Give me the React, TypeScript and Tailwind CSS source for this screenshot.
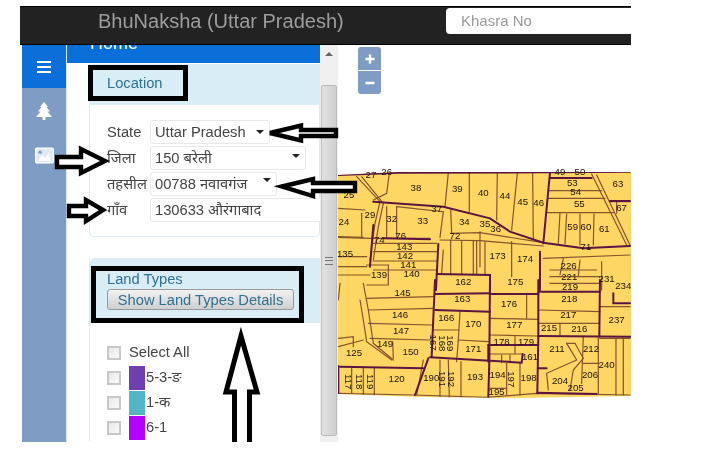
import React from "react";

const thinA = [
  "M25 262 L120 265 L300 265", "M330 270 L450 272 L640 288", "M355 68 L345 170", "M418 70 L418 185", "M502 70 L500 210", "M562 70 L545 240", "M608 70 L610 270",
  "M655 122 L815 122", "M655 145 L825 145", "M650 188 L850 188", "M690 190 L685 280", "M710 192 L705 282", "M750 192 L750 285", "M792 192 L790 285", "M785 72 L890 285", "M800 75 L900 285", "M840 155 L900 155", "M860 155 L860 190",
  "M178 70 L170 130 L130 150", "M80 80 L150 155 L135 220 L120 330", "M95 80 L160 160 L145 230 L130 330", "M200 170 L200 265", "M170 170 L170 265", "M362 175 L365 250", "M450 245 L450 350", "M362 250 L450 248 L640 278",
  "M25 320 L110 320", "M25 350 L110 350", "M130 280 L320 280", "M130 305 L320 305", "M130 333 L320 333", "M130 360 L320 360", "M110 345 L175 345 L175 405 L110 405", "M545 275 L545 380", "M465 275 L465 375", "M660 380 L810 380", "M660 400 L810 400", "M660 360 L800 360", "M900 315 L640 325", "M700 325 L690 375", "M750 330 L745 380", "M815 335 L815 420",
  "M25 175 L105 180", "M25 260 L100 262", "M95 190 L95 262", "M200 170 L340 185 L330 262", "M340 300 L335 370", "M362 270 L362 372", "M395 272 L395 372", "M430 272 L430 372", "M440 272 L440 372", "M120 375 L25 375",
];
const thickA = [
  "M25 75 L110 72 L205 68 L660 67 L900 65", "M130 155 L340 170 L480 205 L540 245 L640 278 L760 295 L900 288", "M660 68 L640 280", "M660 84 L785 84", "M160 265 L300 268", "M325 282 L318 420", "M320 372 L480 375 L480 420", "M630 305 L630 420", "M840 153 L900 153", "M130 225 L120 350",
];
const thinB = [
  "M30 10 L25 60", "M110 55 L310 50", "M115 90 L310 85", "M115 130 L305 135", "M120 175 L300 180", "M25 175 L70 170 L70 200", "M25 200 L100 180", "M100 10 L115 90 L130 190 L190 240", "M90 60 L100 120 L110 185 L185 240",
  "M188 185 L190 235", "M390 95 L385 180 L380 245", "M310 150 L385 150", "M385 180 L475 185", "M590 40 L590 115", "M480 115 L625 118", "M480 165 L620 168", "M555 170 L555 220", "M625 90 L810 95", "M625 130 L808 130", "M690 130 L690 165", "M810 80 L900 80", "M810 175 L900 175", "M858 175 L858 345", "M805 175 L805 340", "M760 170 L755 310", "M760 250 L805 250", "M710 190 L740 240 L650 280 L655 330", "M735 190 L760 235 L730 270 L720 330", "M710 190 L735 190", "M880 175 L880 345",
  "M65 262 L65 340", "M100 262 L100 345", "M133 262 L133 345", "M280 240 L260 345", "M330 240 L330 350", "M355 240 L358 352", "M393 245 L393 352", "M530 250 L530 345", "M570 250 L570 345", "M475 325 L530 325", "M515 225 L515 248", "M540 225 L540 248", "M480 222 L575 222",
  "M25 340 L250 345 L470 352 L620 340 L900 345",
];
const thickB = [
  "M315 0 L305 230", "M315 90 L480 95", "M315 42 L480 40", "M480 0 L478 245", "M480 42 L625 42", "M625 0 L625 170", "M625 35 L810 35", "M810 0 L808 170", "M625 168 L905 170", "M625 170 L622 340", "M475 195 L625 195", "M475 195 L475 245", "M300 232 L575 248 L578 222", "M30 260 L280 265", "M295 235 L255 345", "M25 258 L25 340", "M625 265 L650 265", "M478 245 L475 350", "M622 338 L800 342", "M850 40 L850 70 L900 70",
];

const labelsA: [string, number, number][] = [
  ["26",170,65],["27",123,73],["25",57,135],["38",258,113],["39",382,116],["40",460,127],["44",525,138],["45",578,155],["46",626,157],["49",690,66],["50",750,66],["53",727,97],["54",737,124],["55",748,161],["63",864,100],["67",875,172],["37",320,175],["29",120,195],["32",185,207],["33",278,211],["34",403,214],["24",42,214],["35",465,222],["36",497,235],["59",728,230],["60",768,230],["61",823,236],["72",375,258],["76",212,257],["74",148,268],["143",223,290],["142",225,316],["141",235,345],["140",245,372],["139",147,375],["135",45,311],["173",503,317],["174",585,325],["226",716,347],["71",768,290],["162",400,394],["175",556,396],["221",718,381],
];
const labelsB: [string, number, number][] = [
  ["219",720,20],["231",830,-5],["234",880,18],["145",218,38],["163",397,57],["176",537,72],["218",718,55],["146",210,104],["166",349,112],["170",430,130],["177",553,133],["217",715,103],["237",860,120],["147",213,151],["215",657,142],["216",748,145],["125",72,217],["149",165,190],["150",242,215],["178",515,186],["179",588,186],["171",430,205],["211",681,205],["212",783,205],["240",830,253],["161",600,230],["120",200,295],["190",304,292],["193",435,291],["194",503,285],["198",596,292],["204",690,301],["206",780,284],["205",737,322],["195",500,335],
];
const rotated: [string, number, number][] = [
  ["167",310,188],["168",336,190],["169",362,190],["117",55,305],["118",90,305],["119",123,305],["191",338,297],["192",366,297],["197",545,298],
];

function MapDrawing() {
  return (
    <svg viewBox="338 45 293 397" className="w-full h-full block">
      <defs>
        <clipPath id="mapclip">
          <path d="M338 175 L398 172 L631 172 L631 396 L520 398 L420 397 L338 394 Z" />
        </clipPath>
      </defs>
      <path d="M338 175 L398 172 L631 172 L631 396 L520 398 L420 397 L338 394 Z" fill="#fdd663" />
      <g clipPath="url(#mapclip)" fill="none" strokeLinecap="round">
        <g transform="translate(330 150) scale(0.3333)">
          {thinA.map((d) => <path key={d} d={d} stroke="#86532f" strokeWidth={3.6} />)}
          {thickA.map((d) => <path key={d} d={d} stroke="#5e1440" strokeWidth={6} />)}
        </g>
        <g transform="translate(330 280) scale(0.3333)">
          {thinB.map((d) => <path key={d} d={d} stroke="#86532f" strokeWidth={3.6} />)}
          {thickB.map((d) => <path key={d} d={d} stroke="#5e1440" strokeWidth={6} />)}
        </g>
      </g>
      <g fontFamily="'Liberation Sans', sans-serif" fill="#1f120a" textAnchor="middle" dominantBaseline="central">
        <g transform="translate(330 150) scale(0.3333)" fontSize={29}>
          {labelsA.map(([t, x, y]) => <text key={t + x} x={x} y={y}>{t}</text>)}
        </g>
        <g transform="translate(330 280) scale(0.3333)" fontSize={29}>
          {labelsB.map(([t, x, y]) => <text key={t + x} x={x} y={y}>{t}</text>)}
          {rotated.map(([t, x, y]) => <text key={t + x} x={x} y={y} transform={`rotate(90 ${x} ${y})`}>{t}</text>)}
        </g>
      </g>
    </svg>
  );
}

function Arrows() {
  const arrow = "fill-white stroke-black";
  return (
    <svg viewBox="0 0 713 465" className="absolute inset-0 w-[713px] h-[465px] pointer-events-none">
      <defs>
        <clipPath id="bodyclip"><rect x="0" y="0" width="713" height="442" /></clipPath>
      </defs>
      <polygon className={arrow} strokeWidth={4.4} points="270,133 301,125.5 301,130 336,130 336,136 301,136 301,140.5" />
      <polygon className={arrow} strokeWidth={4.4} points="105,161 81,149 81,157 57,157 57,167 81,167 81,173" />
      <polygon className={arrow} strokeWidth={4.4} points="282,186.5 313,179 313,183 355,183 355,191 313,191 313,196" />
      <polygon className={arrow} strokeWidth={4.4} points="103,210 86,200 86,206 69,206 69,216 86,216 86,221" />
      <polygon className={arrow} clipPath="url(#bodyclip)" strokeWidth={5} points="241,336 226,392 234.5,392 234.5,450 249.5,450 249.5,392 257,392" />
    </svg>
  );
}

function Select({ w, text, caret }: { w: string; text: string; caret?: string }) {
  return (
    <div className={`${w} h-[24px] flex items-center bg-white border border-[#e8e8e8] rounded-[3px] pl-[4px] relative shrink-0 text-[14.7px] text-[#444]`}>
      <span className="whitespace-nowrap">{text}</span>
      {caret && (
        <span className={`absolute ${caret} w-0 h-0 border-l-[4px] border-r-[4px] border-t-[4px] border-l-transparent border-r-transparent border-t-[#222]`} />
      )}
    </div>
  );
}

function Row({ label, children }: { label: string; children: React.ReactNode }) {
  return (
    <div className="flex items-center h-[26px]">
      <span className="w-[43px] shrink-0 text-[14.7px] text-[#444] whitespace-nowrap">{label}</span>
      {children}
    </div>
  );
}

function Check() {
  return <span className="w-[14px] h-[14px] shrink-0 border-2 border-[#c8c8c8] bg-gradient-to-br from-[#e8e8e8] to-[#fafafa]" />;
}

function Land({ color, label }: { color: string; label: string }) {
  return (
    <div className="flex items-center h-[25px] text-[14.7px] text-[#444]">
      <Check />
      <span className="w-[16px] h-[24px] ml-[8px] mr-[1px] shrink-0" style={{ backgroundColor: color }} />
      <span>{label}</span>
    </div>
  );
}

export default function App() {
  const devanagari = { fontFamily: "'Liberation Sans', 'Noto Sans Devanagari', 'Noto Sans', 'Lohit Devanagari', sans-serif" };
  return (
    <div className="relative w-[713px] h-[465px] bg-white overflow-hidden pt-[6px] pl-[20px] blur-[0.35px]" style={devanagari}>
      <header className="w-[611px] h-[39px] bg-[#222] border-y border-black flex items-start shrink-0">
        <div className="ml-[78px] w-[244px] mt-[1px] text-[20px] leading-[26px] text-[#9d9d9d] whitespace-nowrap">BhuNaksha (Uttar Pradesh)</div>
        <div className="ml-[104px] mt-[1px] w-[185px] h-[26px] bg-white rounded-l-[4px] pl-[15px] flex items-center text-[15px] text-[#999]">Khasra No</div>
      </header>

      <div className="flex w-[611px] h-[397px] pl-[2px]">
        <aside className="w-[44px] shrink-0 bg-[#7f9dc4] flex flex-col items-center text-white">
          <div className="w-full h-[43px] bg-[#0a6fd8] flex items-center justify-center">
            <svg width="16" height="14" viewBox="0 0 16 14"><path d="M1 2h14M1 7h14M1 12h14" stroke="white" strokeWidth="2.2" /></svg>
          </div>
          <svg width="16" height="18" viewBox="0 0 16 18" className="mt-[14px]" fill="white"><path d="M8 0 L12 5 H10.5 L14 9.5 H11.5 L16 15 H9.5 V18 H6.5 V15 H0 L4.5 9.5 H2 L5.5 5 H4 Z" /></svg>
          <svg width="19" height="17" viewBox="0 0 20 17" className="mt-[27px]"><rect x="0.7" y="0.7" width="18.6" height="15.6" rx="1.5" fill="#dfe8f3" stroke="white" strokeWidth="1.4" /><path d="M3 14 L8 8 L11 11 L14 6 L17 14 Z" fill="white" /><circle cx="5.5" cy="5" r="1.8" fill="#7f9dc4" /></svg>
        </aside>

        <section className="w-[254px] shrink-0 overflow-hidden border-l border-[#dbe6f3]">
          <div className="h-[18px] bg-[#0a6fd8] pl-[23px] text-white text-[18px] leading-[18px] overflow-hidden">
            <div className="-mt-[11px]">Home</div>
          </div>
          <div className="ml-[22px] mt-[1px]">
            <div className="h-[41px] bg-[#d9edf7] text-[14.7px] text-[#31708f] flex">
              <div className="w-[100px] h-[36px] ml-[-1px] mt-[1px] border-[5px] border-black bg-[#d9edf7] pl-[14px] flex items-center">Location</div>
            </div>
            <div className="h-[132px] border border-t-0 border-[#d9edf7] rounded-b-[5px] pl-[17px] pt-[14px] flex flex-col">
              <Row label="State"><Select w="w-[120px]" text="Uttar Pradesh" caret="right-[5px] top-[9px]" /></Row>
              <Row label="जिला"><Select w="w-[156px]" text="150 बरेली" caret="right-[5px] top-[7px]" /></Row>
              <Row label="तहसील"><Select w="w-[127px]" text="00788 नवावगंज" caret="right-[5px] top-[5px]" /></Row>
              <Row label="गाँव"><Select w="w-[180px]" text="130633 औरंगाबाद" /></Row>
            </div>
            <div className="mt-[21px] h-[183px] border-l border-[#d9edf7] overflow-hidden">
              <div className="h-[65px] bg-[#d9edf7] rounded-tl-[5px] pt-[8px] text-[#31708f]">
                <div className="w-[213px] h-[57px] ml-[1px] border-[5px] border-black pl-[11px] pt-0 text-[14.7px] leading-[16px]">
                  <div>Land Types</div>
                  <button className="mt-[2px] w-[187px] h-[21px] rounded-[3px] border border-[#999] bg-gradient-to-b from-[#f2f2f2] to-[#cfcfcf] text-[14.7px] leading-[18px] text-[#31708f] whitespace-nowrap">Show Land Types Details</button>
                </div>
              </div>
              <div className="pl-[17px] pt-[17px] relative">
                <div className="flex items-center h-[25px] text-[14.7px] text-[#444]">
                  <Check />
                  <span className="ml-[8px]">Select All</span>
                </div>
                <Land color="#6f3fb0" label="5-3-ङ" />
                <Land color="#55b5c8" label="1-क" />
                <Land color="#b300ff" label="6-1" />
                <Land color="#f070b0" label="" />
              </div>
            </div>
          </div>
        </section>

        <div className="w-[18px] shrink-0 bg-[#f0f0f0] flex flex-col items-center">
          <span className="mt-[7px] w-0 h-0 border-l-[4px] border-r-[4px] border-b-[4px] border-l-transparent border-r-transparent border-b-[#666]" />
          <div className="mt-[29px] w-[16px] h-[351px] rounded-[2px] border border-[#bbb] bg-gradient-to-r from-[#e2e2e2] to-[#cfcfcf] flex items-center justify-center">
            <div className="w-[8px] h-[8px] border-y border-[#777] relative"><span className="absolute left-0 right-0 top-[2px] h-[1px] bg-[#777]" /></div>
          </div>
        </div>

        <main className="relative flex-1 min-w-0">
          <MapDrawing />
          <div className="absolute left-[20px] top-[2px] w-[23px] rounded-[3px] overflow-hidden flex flex-col gap-[1px] text-white">
            <div className="h-[23px] bg-[#7f9dc4] flex items-center justify-center"><svg width="10" height="10" viewBox="0 0 10 10"><path d="M5 0.5v9M0.5 5h9" stroke="white" strokeWidth="2.4" /></svg></div>
            <div className="h-[23px] bg-[#7f9dc4] flex items-center justify-center"><svg width="10" height="10" viewBox="0 0 10 10"><path d="M0.5 5h9" stroke="white" strokeWidth="2.4" /></svg></div>
          </div>
        </main>
      </div>
      <Arrows />
    </div>
  );
}
